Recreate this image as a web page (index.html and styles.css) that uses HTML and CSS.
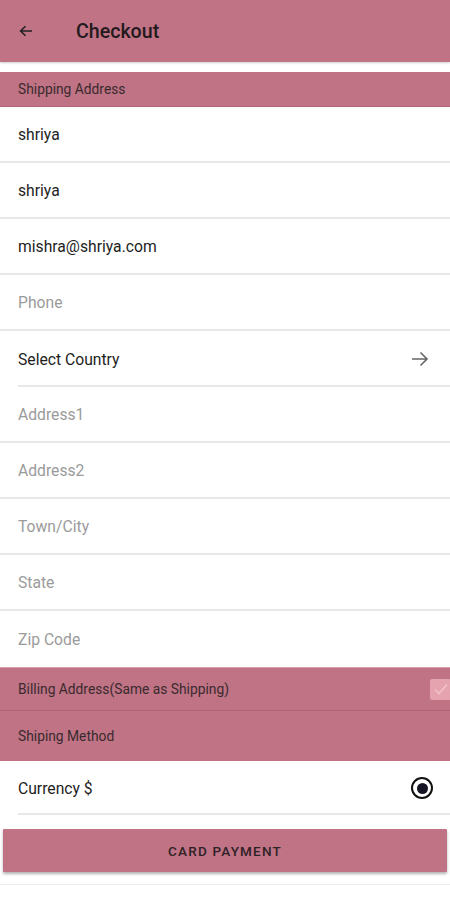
FILE: index.html
```html
<!DOCTYPE html>
<html>
<head>
<meta charset="utf-8">
<link rel="stylesheet" href="styles.css">
</head>
<body>
<div class="app">
  <header class="topbar">
    <svg class="back" width="14" height="12" viewBox="0 0 14 12"><path d="M13 6H2M6.5 1.2L1.6 6l4.9 4.8" fill="none" stroke="#222" stroke-width="1.6"/></svg>
    <h1 class="title">Checkout</h1>
  </header>
  <div class="gap"></div>
  <div class="section">Shipping Address</div>
  <div class="row filled">shriya</div>
  <div class="row filled">shriya</div>
  <div class="row filled">mishra@shriya.com</div>
  <div class="row ph">Phone</div>
  <div class="row filled select inset">
    <span>Select Country</span>
    <svg class="fwd" width="18" height="16" viewBox="0 0 18 16"><path d="M1 8h15M9.5 1.5L16 8l-6.5 6.5" fill="none" stroke="#666" stroke-width="1.6"/></svg>
  </div>
  <div class="row ph">Address1</div>
  <div class="row ph">Address2</div>
  <div class="row ph">Town/City</div>
  <div class="row ph">State</div>
  <div class="row ph last">Zip Code</div>
  <div class="band billing">
    <span>Billing Address(Same as Shipping)</span>
    <span class="check"><svg width="20" height="20" viewBox="0 0 20 20"><path d="M4 10.5l4 4 8-9" fill="none" stroke="#e7a3ad" stroke-width="1.6"/></svg></span>
  </div>
  <div class="band method">Shiping Method</div>
  <div class="row filled currency inset">
    <span>Currency $</span>
    <span class="radio"><span class="dot"></span></span>
  </div>
  <div class="btnwrap"><button class="pay">CARD PAYMENT</button></div>
  <div class="bottomline"></div>
</div>
</body>
</html>
```

FILE: styles.css
```css
* { box-sizing: border-box; }
html, body { margin: 0; padding: 0; background: #fff; }
body { font-family: Roboto, "Noto Sans", sans-serif; width: 450px; height: 900px; overflow: hidden; }
.app { display: flex; flex-direction: column; }
.topbar {
  height: 62px; background: #bf7385; display: flex; align-items: center;
  padding-left: 19px; box-shadow: 0 1px 2px rgba(0,0,0,0.2); position: relative; z-index: 1;
}
.back { display: block; }
.title { margin: 0 0 0 43px; font-size: 19.6px; font-weight: 500; color: #231a1d; }
.gap { height: 10px; background: #fff; }
.section {
  height: 35px; background: #bf7385; color: #3a2a2e; font-size: 13.8px;
  display: flex; align-items: center; padding-left: 18px; border-bottom: 1px solid #b06576;
}
.row {
  height: 56px; display: flex; align-items: center; padding-left: 18px; padding-right: 18px;
  font-size: 15.7px; border-bottom: 2px solid #e8e8e8; justify-content: space-between;
}
.row.filled { color: #1e1e1e; }
.row.ph { color: #9b9b9b; }
.row.last { border-bottom: none; }
.row.inset { border-bottom: none; background: linear-gradient(#e8e8e8, #e8e8e8) no-repeat 18px 100% / calc(100% - 18px) 2px; }
.fwd { margin-right: 3px; }
.band {
  background: #bf7385; color: #3a2a2e; font-size: 13.8px; display: flex; align-items: center;
  padding-left: 18px; justify-content: space-between;
}
.billing { height: 44px; border-bottom: 1px solid #ad6577; border-top: 1px solid #d9a0ab; }
.method { height: 50px; }
.check {
  width: 21px; height: 21px; background: #e4a3ae; border-radius: 2px; margin-right: -1px;
  display: flex; align-items: center; justify-content: center;
}
.check svg path { stroke: #f2c1c8; }
.currency { height: 54px; }
.radio {
  width: 22px; height: 22px; border: 2.5px solid #111; border-radius: 50%;
  display: flex; align-items: center; justify-content: center; margin-right: -1px;
}
.dot { width: 11px; height: 11px; background: #151526; border-radius: 50%; }
.btnwrap { padding: 14px 3px 0 3px; }
.pay {
  width: 100%; height: 43px; background: #bf7385; border: none; border-radius: 1px;
  box-shadow: 0 2px 3px rgba(0,0,0,0.3); font-family: Roboto, sans-serif; font-size: 13.5px;
  font-weight: 500; letter-spacing: 1.2px; color: #2e2226;
}
.bottomline { height: 1px; background: #ececec; margin-top: 12px; }
```
